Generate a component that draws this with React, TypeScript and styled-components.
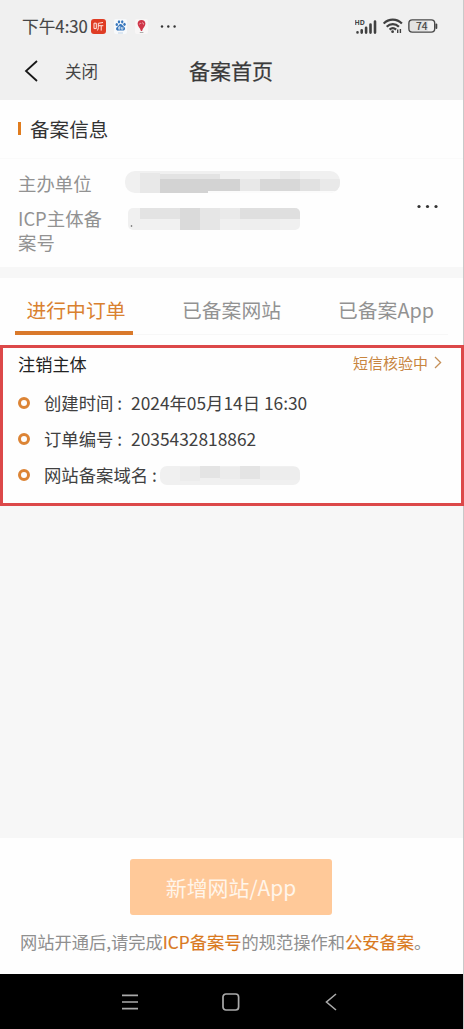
import React from 'react';
import styled, { createGlobalStyle } from 'styled-components';

const GlobalStyle = createGlobalStyle`
  * { box-sizing: border-box; }
  body { margin: 0; background: #fff; font-family: "Noto Sans CJK SC", "Noto Sans", sans-serif; }
  svg { display: block; flex: none; }
`;

const Screen = styled.div`
  width: 464px;
  height: 1029px;
  display: flex;
  flex-direction: column;
  background: #f7f7f7;
  border-right: 1px solid #c9c9c9;
  white-space: nowrap;
`;
const TopArea = styled.header`
  height: 100px;
  background: #f0f0f0;
  flex: none;
`;
const StatusBar = styled.div`
  height: 52px;
  padding: 0 25px 0 22px;
  display: flex;
  align-items: center;
  justify-content: space-between;
`;
const StatusGroup = styled.div<{ $gap?: number }>`
  display: flex;
  align-items: center;
  gap: ${p => p.$gap ?? 0}px;
`;
const Clock = styled.span`
  font-size: 16.7px;
  -webkit-text-stroke: 0.15px #454545;
  line-height: 20px;
  width: 69px;
  color: #454545;
`;
const TitleBar = styled.div`
  height: 38px;
  display: grid;
  grid-template-columns: 65px 100px 132px 1fr;
  align-items: center;
`;
const BackButton = styled.div`
  padding-left: 23px;
`;
const CloseLabel = styled.span`
  font-size: 16.5px;
  color: #444;
  line-height: 24px;
`;
const PageTitle = styled.h1`
  margin: -2px 0 0;
  text-align: center;
  font-size: 21px;
  font-weight: 400;
  -webkit-text-stroke: 0.25px #3a3a3a;
  line-height: 30px;
  color: #3a3a3a;
`;
const InfoCard = styled.section`
  height: 167px;
  background: #fefefe;
  flex: none;
`;
const SectionHead = styled.div`
  height: 59px;
  border-bottom: 1px solid #fafafa;
  padding-left: 18px;
  display: flex;
  align-items: center;
  gap: 9px;
`;
const Accent = styled.i`
  width: 3px;
  height: 13px;
  margin-bottom: 2px;
  background: #e07c1e;
`;
const SectionTitle = styled.h2`
  margin: 0;
  font-size: 19.6px;
  font-weight: 400;
  line-height: 28px;
  color: #333;
`;
const InfoBody = styled.div`
  display: grid;
  grid-template-columns: 107px 290px 1fr;
  padding: 12px 0 0 18px;
`;
const Labels = styled.div`
  display: flex;
  flex-direction: column;
  gap: 11px;
`;
const Label = styled.div`
  font-size: 18.4px;
  line-height: 24px;
  color: #929292;
`;
const Values = styled.div`
  display: flex;
  flex-direction: column;
  gap: 15px;
`;
const More = styled.div`
  padding: 33px 0 0 2px;
`;
const Tabs = styled.nav`
  height: 67px;
  margin-top: 11px;
  background: #fefefe;
  padding: 0 15px;
  display: grid;
  grid-template-columns: 118px 1fr 118px;
  align-items: start;
  flex: none;
`;
const Tab = styled.div<{ $active?: boolean; $shift?: number }>`
  height: 57px;
  padding-top: 4px;
  text-indent: ${p => p.$shift ?? 0}px;
  text-align: center;
  font-size: 19.8px;
  line-height: 56px;
  color: ${p => (p.$active ? '#d9812f' : '#929292')};
  border-bottom: ${p => (p.$active ? '4px solid #d9792b' : '1px solid #f7f7f7')};
`;
const Order = styled.section`
  height: 161px;
  margin-right: -1px;
  border: 3px solid #dc4849;
  background: #fefefe;
  padding: 3px 19px 0 15px;
  flex: none;
`;
const OrderHead = styled.div`
  height: 26px;
  display: flex;
  justify-content: space-between;
`;
const OrderName = styled.div`
  font-size: 17.2px;
  line-height: 26px;
  color: #222;
`;
const OrderState = styled.div`
  display: flex;
  gap: 6px;
  padding-top: 1px;
  font-size: 15px;
  line-height: 22px;
  color: #c8853f;
  svg { margin-top: 4px; }
`;
const Details = styled.div`
  padding-top: 14px;
  display: flex;
  flex-direction: column;
  gap: 12px;
`;
const Detail = styled.div`
  display: flex;
  align-items: center;
  height: 24px;
  font-size: 17.35px;
  line-height: 24px;
  color: #404040;
`;
const Bullet = styled.i`
  width: 12px;
  height: 12px;
  border: 3px solid #dc8435;
  border-radius: 50%;
  margin-right: 14px;
  flex: none;
`;
const DetailLabel = styled.span<{ $width: number }>`
  width: ${p => p.$width}px;
`;
const Footer = styled.footer`
  height: 136px;
  margin-top: auto;
  padding-top: 21px;
  background: #fefefe;
  display: flex;
  flex-direction: column;
  align-items: center;
  flex: none;
`;
const AddButton = styled.button`
  width: 202px;
  height: 56px;
  margin-right: 1px;
  padding: 0;
  border: 0;
  border-radius: 3px;
  background: #ffc999;
  color: #fff5ea;
  font: 400 20.9px "Noto Sans CJK SC", sans-serif;
`;
const Notice = styled.p`
  margin: 14px 0 0;
  padding-left: 20px;
  align-self: flex-start;
  font-size: 17.25px;
  line-height: 26px;
  color: #8f8f8f;
`;
const Link = styled.span`
  color: #d9791d;
  -webkit-text-stroke: 0.15px #d9791d;
`;
const SystemNav = styled.div`
  height: 55px;
  background: #000;
  display: flex;
  align-items: center;
  padding: 1px 0 0 121px;
  gap: 83px;
  flex: none;
`;

type Block = [number, number, number, number, string];

const Mosaic = ({ width, height, id, blocks, radius }: { width: number; height: number; id: string; blocks: Block[]; radius: number }) => (
  <svg width={width} height={height}>
    <clipPath id={id}><rect width={width} height={height} rx={radius} /></clipPath>
    <g clipPath={`url(#${id})`}>
      <rect width={width} height={height} fill="#f0f0f0" />
      {blocks.map(([x, y, w, h, fill], i) => <rect key={i} x={x} y={y} width={w} height={h} fill={fill} />)}
    </g>
  </svg>
);

const ownerBlocks: Block[] = [
  [15, 2, 20, 20, '#e8e8e8'], [35, 3, 60, 6, '#e3e3e3'], [35, 8, 80, 12, '#d3d3d3'], [35, 20, 48, 2, '#d3d3d3'],
  [83, 20, 132, 2, '#fbfbfb'], [115, 8, 20, 12, '#e8e8e8'], [135, 8, 40, 12, '#d8d8d8'], [155, 0, 20, 8, '#e9e9e9'],
  [175, 8, 20, 12, '#e1e1e1'], [195, 8, 20, 12, '#e9e9e9'],
];
const icpBlocks: Block[] = [
  [12, 0, 40, 11, '#e3e3e3'], [12, 11, 40, 11, '#f1f1f1'], [52, 0, 20, 22, '#dadada'], [72, 0, 20, 22, '#e6e6e6'],
  [92, 0, 20, 11, '#eaeaea'], [112, 0, 40, 11, '#dfdfdf'], [152, 0, 22, 11, '#dfdfdf'], [112, 11, 40, 11, '#eeeeee'],
];
const domainBlocks: Block[] = [
  [20, 1, 20, 14, '#ececec'], [40, 0, 20, 12, '#e4e4e4'], [60, 1, 20, 12, '#ececec'], [80, 0, 20, 13, '#e4e4e4'], [100, 1, 40, 13, '#ededed'],
];

const ListenIcon = () => (
  <svg width="15" height="15" viewBox="0 0 15 15">
    <rect width="15" height="15" rx="3" fill="#df3c24" />
    <path d="M3 4.2h2.3v5.4H3zM12 3.5 7.3 4.3v4.2c0 1-.2 2-.9 3M7.5 6.7h4.8M10.2 6.8v4.8" fill="none" stroke="#ffe9e3" strokeWidth="1" />
  </svg>
);
const PawIcon = () => (
  <svg width="13" height="15" viewBox="0 0 13 15">
    <rect width="13" height="15" rx="2" fill="#f7f9fb" />
    <g fill="#3978bd">
      <ellipse cx="2.8" cy="5.5" rx="1.2" ry="1.6" /><ellipse cx="5" cy="2.8" rx="1.2" ry="1.6" />
      <ellipse cx="8.2" cy="2.8" rx="1.2" ry="1.6" /><ellipse cx="10.5" cy="5.3" rx="1.2" ry="1.6" />
      <path d="M6.6 5C5 5 4.5 7 2.8 8.2 1.2 9.6 2.5 12 4.5 11.6c1.4-.2 2.7-.2 4 0 2.6.3 3.3-2.2 1.8-3.5C8.6 6.9 8.1 5 6.6 5Z" />
    </g>
    <path d="M5.8 8H4.7v2.2h1.1V7M7.4 8v2.2h1.5V8" fill="none" stroke="#fff" strokeWidth=".7" />
    <path d="M4 14h5" stroke="#aac4df" strokeWidth=".7" />
  </svg>
);
const PinIcon = () => (
  <svg width="13" height="15" viewBox="0 0 13 15">
    <rect width="13" height="15" rx="2" fill="#f8f6f6" />
    <path d="M6.5 1a3.9 3.9 0 0 0-3.9 3.8c0 2.5 2.6 4.1 3.3 7.2h1.2c.7-3.1 3.3-4.7 3.3-7.2A3.9 3.9 0 0 0 6.5 1Z" fill="#cf3548" />
    <path d="M4.4 5.5c.3-1.3 1.2-1.9 1.7-.6M7 4c.9-.5 1.8.3 1.5 1.5" stroke="#f0bcc3" strokeWidth=".8" fill="none" />
    <path d="M4.8 13.5h3.6" stroke="#999" strokeWidth=".8" />
  </svg>
);
const Dots = ({ gap, r }: { gap: number; r: number }) => (
  <svg width={gap * 2 + 4} height="5" fill="#333">
    <circle cx="2" cy="2.5" r={r} /><circle cx={2 + gap} cy="2.5" r={r} /><circle cx={2 + gap * 2} cy="2.5" r={r} />
  </svg>
);
const SignalIcon = () => (
  <svg width="23" height="17" viewBox="0 0 23 17">
    <text x="-.5" y="6.6" fontSize="6.9" fontWeight="700" fontFamily="Noto Sans, sans-serif" fill="#444">HD</text>
    <g stroke="#404040" strokeWidth="2.6" strokeLinecap="round">
      <path d="M2.5 14.4v.1M6.7 12.2v2.4M11.1 9.8v4.8M15.5 6.5v8.1M20 3.6v11" />
    </g>
  </svg>
);
const WifiIcon = () => (
  <svg width="20" height="16" viewBox="0 0 20 16" fill="none" stroke="#404040" strokeWidth="2.2">
    <path d="M.7 5.6c5-5.3 13.2-5.3 18.2 0M3.7 8.8c3.5-3.5 8.7-3.5 12.2 0M6.6 11.6c1.9-1.8 4.6-1.8 6.5 0" />
    <circle cx="9.6" cy="13.7" r="1.4" fill="#404040" stroke="none" />
    <path d="M14.7 11.5v3.5m2.7-4v4" strokeWidth="1.4" />
  </svg>
);
const BatteryIcon = () => (
  <svg width="30" height="14" viewBox="0 0 30 14">
    <rect x="2" y="2" width="18" height="10" fill="#e3e3e3" />
    <rect x=".9" y=".9" width="25.8" height="12.2" rx="3.4" fill="none" stroke="#484848" strokeWidth="1.4" />
    <path d="M28.4 5.4v3.6" stroke="#444" strokeWidth="1.8" strokeLinecap="round" />
    <text x="13.8" y="10.9" textAnchor="middle" fontSize="10.3" fontWeight="400" stroke="#3d3d3d" strokeWidth=".2" fontFamily="Noto Sans CJK SC, sans-serif" fill="#3d3d3d">74</text>
  </svg>
);

export default function App() {
  return (
    <>
      <GlobalStyle />
      <Screen>
        <TopArea>
          <StatusBar>
            <StatusGroup $gap={0}>
              <Clock>下午4:30</Clock>
              <StatusGroup $gap={8}>
                <ListenIcon /><PawIcon /><PinIcon />
              </StatusGroup>
              <svg width="12" height="1" />
              <Dots gap={6.3} r={1.2} />
            </StatusGroup>
            <StatusGroup $gap={5}>
              <SignalIcon /><WifiIcon /><BatteryIcon />
            </StatusGroup>
          </StatusBar>
          <TitleBar>
            <BackButton>
              <svg width="16" height="22" viewBox="0 0 16 22" fill="none" stroke="#171717" strokeWidth="1.8">
                <path d="M14 1 3 11l11 10" />
              </svg>
            </BackButton>
            <CloseLabel>关闭</CloseLabel>
            <PageTitle>备案首页</PageTitle>
          </TitleBar>
        </TopArea>

        <InfoCard>
          <SectionHead><Accent /><SectionTitle>备案信息</SectionTitle></SectionHead>
          <InfoBody>
            <Labels>
              <Label>主办单位</Label>
              <Label>ICP主体备<br />案号</Label>
            </Labels>
            <Values>
              <Mosaic id="owner" width={215} height={22} radius={10} blocks={ownerBlocks} />
              <svg width="177" height="24">
                <g transform="translate(3 0)"><Mosaic id="icp" width={172} height={22} radius={5} blocks={icpBlocks} /></g>
                <circle cx="6.5" cy="18" r=".8" fill="#555" />
              </svg>
            </Values>
            <More><Dots gap={8.5} r={1.6} /></More>
          </InfoBody>
        </InfoCard>

        <Tabs>
          <Tab $active $shift={4}>进行中订单</Tab>
          <Tab>已备案网站</Tab>
          <Tab $shift={-6}>已备案App</Tab>
        </Tabs>

        <Order>
          <OrderHead>
            <OrderName>注销主体</OrderName>
            <OrderState>
              短信核验中
              <svg width="8" height="13" viewBox="0 0 8 13" fill="none" stroke="#c59058" strokeWidth="1.3"><path d="m1 1 5.6 5.5L1 12" /></svg>
            </OrderState>
          </OrderHead>
          <Details>
            <Detail><Bullet /><DetailLabel $width={87}>创建时间 :</DetailLabel>2024年05月14日 16:30</Detail>
            <Detail><Bullet /><DetailLabel $width={87}>订单编号 :</DetailLabel>2035432818862</Detail>
            <Detail>
              <Bullet /><DetailLabel $width={116}>网站备案域名 :</DetailLabel>
              <Mosaic id="domain" width={140} height={19} radius={7} blocks={domainBlocks} />
            </Detail>
          </Details>
        </Order>

        <Footer>
          <AddButton>新增网站/App</AddButton>
          <Notice>网站开通后,请完成<Link>ICP备案号</Link>的规范操作和<Link>公安备案</Link>。</Notice>
        </Footer>
        <SystemNav>
          <svg width="18" height="18" viewBox="0 0 18 18" stroke="#aaa" strokeWidth="1.6"><path d="M1 2.4h16M1 9h16M1 15.6h16" /></svg>
          <svg width="18" height="18" viewBox="0 0 18 18" fill="none" stroke="#aaa" strokeWidth="1.7"><rect x="1" y="1" width="15.6" height="16" rx="3" /></svg>
          <svg width="18" height="18" viewBox="0 0 18 18" fill="none" stroke="#aaa" strokeWidth="1.6"><path d="M13 1 3.5 9 13 17" /></svg>
        </SystemNav>
      </Screen>
    </>
  );
}
